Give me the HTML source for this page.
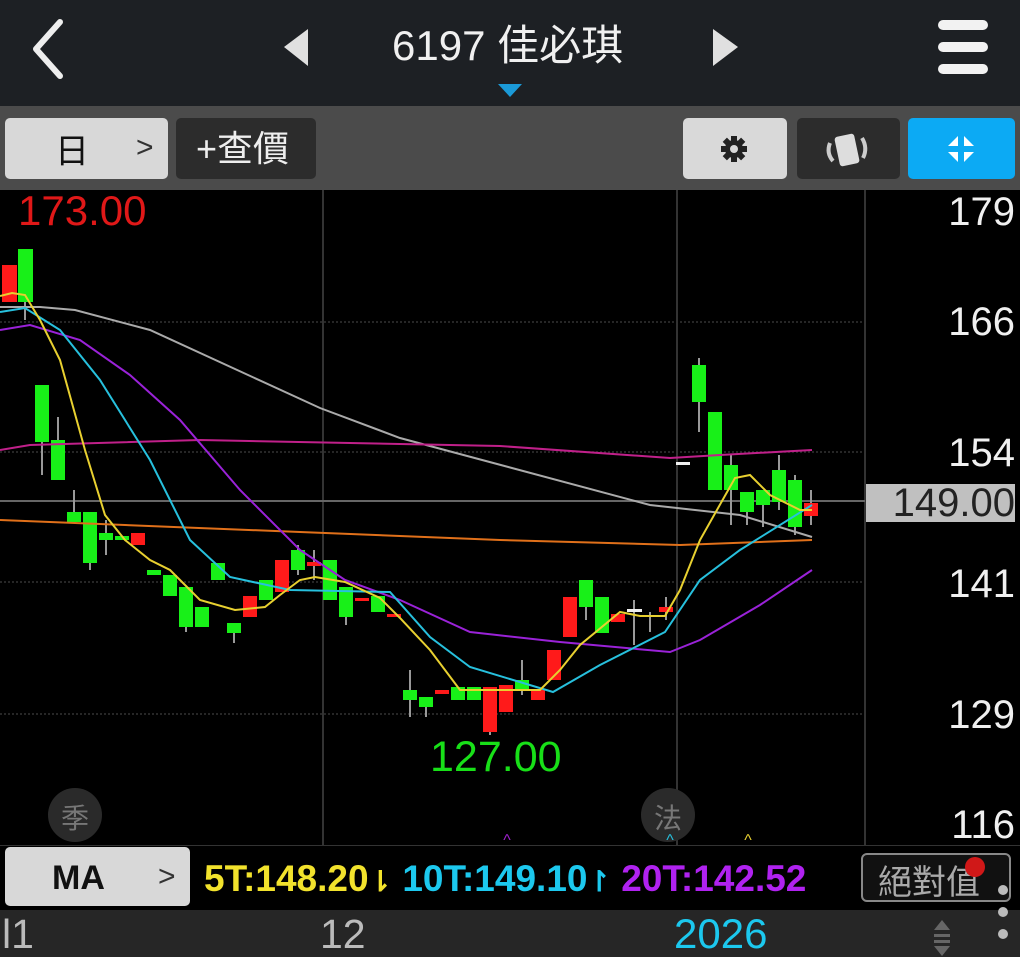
<!DOCTYPE html>
<html><head><meta charset="utf-8"><style>
*{margin:0;padding:0;box-sizing:border-box}
body{width:1020px;height:957px;background:#000;overflow:hidden;font-family:"Liberation Sans","Noto Sans CJK TC",sans-serif;position:relative}
.abs{position:absolute}
</style></head><body>
<div class="abs" style="left:0;top:0;width:1020px;height:106px;background:#1d2024"></div>
<svg class="abs" style="left:0;top:0" width="1020" height="106">
<polyline points="60,22 36,49 60,76" fill="none" stroke="#eee" stroke-width="6" stroke-linecap="round" stroke-linejoin="round"/>
<polygon points="308,29 308,66 284,47" fill="#e0e0e0"/>
<polygon points="713,29 713,66 738,47" fill="#e0e0e0"/>
<rect x="938" y="20" width="50" height="10" rx="5" fill="#f2f2f2"/>
<rect x="938" y="42" width="50" height="10" rx="5" fill="#f2f2f2"/>
<rect x="938" y="64" width="50" height="10" rx="5" fill="#f2f2f2"/>
<polygon points="498,84 522,84 510,97" fill="#1b9ad8"/>
</svg>
<div class="abs" style="left:392px;top:20px;font-size:42px;color:#f0f0f0;line-height:52px">6197 佳必琪</div>
<div class="abs" style="left:0;top:106px;width:1020px;height:84px;background:#4b4b4b"></div>
<div class="abs" style="left:5px;top:118px;width:163px;height:61px;background:#d8d8d8;border-radius:5px"></div>
<div class="abs" style="left:55px;top:132px;font-size:34px;color:#111;line-height:40px">日</div>
<div class="abs" style="left:136px;top:130px;font-size:30px;color:#333;line-height:36px">&gt;</div>
<div class="abs" style="left:176px;top:118px;width:140px;height:61px;background:#2c2c2c;border-radius:5px"></div>
<div class="abs" style="left:196px;top:129px;font-size:36px;color:#eee;line-height:40px">+查價</div>
<div class="abs" style="left:683px;top:118px;width:104px;height:61px;background:#d9d9d9;border-radius:5px"></div>
<svg class="abs" style="left:719px;top:134px" width="30" height="30"><g fill="#222"><circle cx="15" cy="15" r="9"/><rect x="12" y="2" width="6" height="26"/><rect x="2" y="12" width="26" height="6"/><rect x="12" y="2" width="6" height="26" transform="rotate(45 15 15)"/><rect x="12" y="2" width="6" height="26" transform="rotate(-45 15 15)"/></g><circle cx="15" cy="15" r="4" fill="#d9d9d9"/></svg>
<div class="abs" style="left:797px;top:118px;width:103px;height:61px;background:#2c2c2c;border-radius:5px"></div>
<svg class="abs" style="left:820px;top:128px" width="60" height="45"><rect x="17" y="7" width="20" height="30" rx="3" fill="#ddd" transform="rotate(-12 27 22)"/><path d="M10 15 Q6 25 13 33" stroke="#ccc" stroke-width="4" fill="none"/><path d="M42 10 Q48 20 43 30" stroke="#ccc" stroke-width="4" fill="none"/></svg>
<div class="abs" style="left:908px;top:118px;width:107px;height:61px;background:#0caaf4;border-radius:5px"></div>
<svg class="abs" style="left:945px;top:133px" width="32" height="32"><polygon points="13,3 13,13 3,13" fill="#fff"/><polygon points="19,3 19,13 29,13" fill="#fff"/><polygon points="13,29 13,19 3,19" fill="#fff"/><polygon points="19,29 19,19 29,19" fill="#fff"/></svg>

<svg class="abs" style="left:0;top:190px" width="1020" height="655">
<g stroke="#333" stroke-width="1.5" stroke-dasharray="2,2">
<line x1="0" y1="132" x2="865" y2="132"/><line x1="0" y1="262" x2="865" y2="262"/><line x1="0" y1="392" x2="865" y2="392"/><line x1="0" y1="524" x2="865" y2="524"/>
</g>
<line x1="323" y1="0" x2="323" y2="655" stroke="#333" stroke-width="2"/>
<line x1="677" y1="0" x2="677" y2="655" stroke="#333" stroke-width="2"/>
<line x1="865" y1="0" x2="865" y2="655" stroke="#333" stroke-width="2"/>
<line x1="0" y1="311" x2="865" y2="311" stroke="#666" stroke-width="2"/>
</svg>
<svg class="abs" style="left:0;top:0" width="1020" height="845">
<g stroke="#999" stroke-width="2">
<line x1="25" y1="300" x2="25" y2="320"/><line x1="42" y1="440" x2="42" y2="475"/><line x1="58" y1="417" x2="58" y2="440"/><line x1="74" y1="490" x2="74" y2="512"/><line x1="90" y1="563" x2="90" y2="570"/><line x1="106" y1="520" x2="106" y2="555"/><line x1="186" y1="627" x2="186" y2="632"/><line x1="234" y1="633" x2="234" y2="643"/><line x1="298" y1="545" x2="298" y2="575"/><line x1="314" y1="550" x2="314" y2="580"/><line x1="346" y1="617" x2="346" y2="625"/><line x1="410" y1="670" x2="410" y2="717"/><line x1="426" y1="707" x2="426" y2="717"/><line x1="490" y1="732" x2="490" y2="735"/><line x1="522" y1="660" x2="522" y2="695"/><line x1="586" y1="607" x2="586" y2="620"/><line x1="634" y1="600" x2="634" y2="645"/><line x1="650" y1="612" x2="650" y2="632"/><line x1="666" y1="597" x2="666" y2="620"/><line x1="699" y1="358" x2="699" y2="432"/><line x1="731" y1="455" x2="731" y2="525"/><line x1="747" y1="512" x2="747" y2="525"/><line x1="763" y1="505" x2="763" y2="527"/><line x1="779" y1="455" x2="779" y2="510"/><line x1="795" y1="475" x2="795" y2="535"/><line x1="811" y1="490" x2="811" y2="525"/>
</g>
<g fill="#ff1a1a">
<rect x="2" y="265" width="15" height="37"/><rect x="131" y="533" width="14" height="12"/><rect x="243" y="596" width="14" height="21"/><rect x="275" y="560" width="14" height="32"/><rect x="307" y="562" width="14" height="4"/><rect x="355" y="598" width="14" height="3"/><rect x="387" y="614" width="14" height="3"/><rect x="435" y="690" width="14" height="4"/><rect x="483" y="687" width="14" height="45"/><rect x="499" y="685" width="14" height="27"/><rect x="531" y="690" width="14" height="10"/><rect x="547" y="650" width="14" height="30"/><rect x="563" y="597" width="14" height="40"/><rect x="611" y="614" width="14" height="8"/><rect x="659" y="607" width="14" height="5"/><rect x="804" y="503" width="14" height="13"/>
</g>
<g fill="#18f018">
<rect x="18" y="249" width="15" height="53"/><rect x="35" y="385" width="14" height="57"/><rect x="51" y="440" width="14" height="40"/><rect x="67" y="512" width="14" height="10"/><rect x="83" y="512" width="14" height="51"/><rect x="99" y="533" width="14" height="7"/><rect x="115" y="536" width="14" height="4"/><rect x="147" y="570" width="14" height="5"/><rect x="163" y="575" width="14" height="21"/><rect x="179" y="587" width="14" height="40"/><rect x="195" y="607" width="14" height="20"/><rect x="211" y="563" width="14" height="17"/><rect x="227" y="623" width="14" height="10"/><rect x="259" y="580" width="14" height="20"/><rect x="291" y="550" width="14" height="20"/><rect x="323" y="560" width="14" height="40"/><rect x="339" y="587" width="14" height="30"/><rect x="371" y="596" width="14" height="16"/><rect x="403" y="690" width="14" height="10"/><rect x="419" y="697" width="14" height="10"/><rect x="451" y="687" width="14" height="13"/><rect x="467" y="687" width="14" height="13"/><rect x="515" y="680" width="14" height="10"/><rect x="579" y="580" width="14" height="27"/><rect x="595" y="597" width="14" height="36"/><rect x="692" y="365" width="14" height="37"/><rect x="708" y="412" width="14" height="78"/><rect x="724" y="465" width="14" height="25"/><rect x="740" y="492" width="14" height="20"/><rect x="756" y="490" width="14" height="15"/><rect x="772" y="470" width="14" height="32"/><rect x="788" y="480" width="14" height="47"/>
</g>
<g fill="#eee"><rect x="627" y="609" width="15" height="3"/><rect x="643" y="615" width="14" height="2"/><rect x="676" y="462" width="14" height="3"/></g>
<g fill="none" stroke-width="2">
<polyline stroke="#aaa" points="0,307 40,307 75,310 150,330 320,408 400,438 650,505 740,515 812,537"/>
<polyline stroke="#c0208a" points="0,450 30,445 200,440 500,446 670,458 720,455 812,450"/>
<polyline stroke="#e0701a" points="0,520 300,532 500,540 680,545 812,540"/>
<polyline stroke="#9a22d8" points="0,330 30,325 80,340 130,375 180,420 240,490 300,550 345,580 400,600 470,632 560,642 670,652 700,640 760,605 812,570"/>
<polyline stroke="#27c0dd" points="0,312 25,308 60,330 100,380 150,460 190,540 230,577 290,590 390,592 430,637 470,667 553,692 600,665 665,632 700,580 740,550 812,505"/>
<polyline stroke="#e8d030" points="0,296 12,293 25,295 40,320 60,360 85,450 105,515 125,540 150,560 170,570 200,600 235,610 265,607 280,595 300,580 315,577 345,582 380,598 400,618 430,650 460,690 480,690 540,690 560,670 580,645 620,612 640,616 665,616 680,590 700,540 735,478 750,475 770,495 800,510 812,510"/>
</g>
<circle cx="75" cy="815" r="27" fill="#2a2a2a"/><circle cx="668" cy="815" r="27" fill="#2a2a2a"/>
<text x="75" y="828" font-size="28" fill="#777" text-anchor="middle" font-family="Noto Sans CJK TC,sans-serif">季</text>
<text x="668" y="828" font-size="28" fill="#777" text-anchor="middle" font-family="Noto Sans CJK TC,sans-serif">法</text>
<text x="507" y="845" font-size="16" fill="#a020d0" text-anchor="middle">^</text>
<text x="670" y="845" font-size="16" fill="#27c0dd" text-anchor="middle">^</text>
<text x="748" y="845" font-size="16" fill="#e8d030" text-anchor="middle">^</text>
</svg>
<div class="abs" style="left:18px;top:188px;font-size:42px;color:#e01818;line-height:46px">173.00</div>
<div class="abs" style="left:430px;top:734px;font-size:43px;color:#18e018;line-height:46px">127.00</div>
<div class="abs" style="left:866px;top:190px;width:149px;text-align:right;font-size:40px;color:#f0f0f0;line-height:44px">179</div>
<div class="abs" style="left:866px;top:300px;width:149px;text-align:right;font-size:40px;color:#f0f0f0;line-height:44px">166</div>
<div class="abs" style="left:866px;top:431px;width:149px;text-align:right;font-size:40px;color:#f0f0f0;line-height:44px">154</div>
<div class="abs" style="left:866px;top:484px;width:149px;height:38px;background:#c0c0c0"></div>
<div class="abs" style="left:866px;top:481px;width:149px;text-align:right;font-size:40px;color:#222;line-height:44px">149.00</div>
<div class="abs" style="left:866px;top:562px;width:149px;text-align:right;font-size:40px;color:#f0f0f0;line-height:44px">141</div>
<div class="abs" style="left:866px;top:693px;width:149px;text-align:right;font-size:40px;color:#f0f0f0;line-height:44px">129</div>
<div class="abs" style="left:866px;top:803px;width:149px;text-align:right;font-size:40px;color:#f0f0f0;line-height:44px">116</div>
<div class="abs" style="left:0;top:845px;width:1020px;height:65px;background:#000;border-top:1px solid #333"></div>
<div class="abs" style="left:5px;top:847px;width:185px;height:59px;background:#d8d8d8;border-radius:5px"></div>
<div class="abs" style="left:52px;top:858px;font-size:34px;font-weight:bold;color:#111;line-height:40px">MA</div>
<div class="abs" style="left:158px;top:858px;font-size:30px;color:#333;line-height:38px">&gt;</div>
<div class="abs" style="left:204px;top:856px;width:652px;overflow:hidden;white-space:nowrap;font-size:37px;font-weight:bold;line-height:46px"><span style="color:#f2e22c">5T:148.20</span><span style="color:#f2e22c;font-size:28px">⇂</span> <span style="color:#1cc8ee">10T:149.10</span><span style="color:#1cc8ee;font-size:28px">↾</span> <span style="color:#b022f0">20T:142.52</span></div>
<div class="abs" style="left:861px;top:853px;width:150px;height:49px;border:2px solid #888;border-radius:6px;background:#111"></div>
<div class="abs" style="left:878px;top:858px;font-size:34px;color:#aaa;line-height:44px;font-family:'Noto Sans CJK TC',sans-serif">絕對值</div>
<div class="abs" style="left:965px;top:857px;width:20px;height:20px;border-radius:50%;background:#d01818"></div>
<div class="abs" style="left:0;top:910px;width:1020px;height:47px;background:#262626"></div>
<div class="abs" style="left:2px;top:911px;font-size:41px;color:#bbb;line-height:46px">l1</div>
<div class="abs" style="left:320px;top:911px;font-size:41px;color:#bbb;line-height:46px">12</div>
<div class="abs" style="left:674px;top:911px;font-size:42px;color:#1cc8ee;line-height:46px">2026</div>
<svg class="abs" style="left:928px;top:880px" width="92" height="77"><polygon points="14,40 6,50 22,50" fill="#666"/><rect x="6" y="54" width="16" height="3" fill="#666"/><rect x="6" y="60" width="16" height="3" fill="#666"/><polygon points="14,76 6,66 22,66" fill="#666"/><circle cx="75" cy="10" r="5" fill="#bbb"/><circle cx="75" cy="32" r="5" fill="#bbb"/><circle cx="75" cy="54" r="5" fill="#bbb"/></svg>
</body></html>
